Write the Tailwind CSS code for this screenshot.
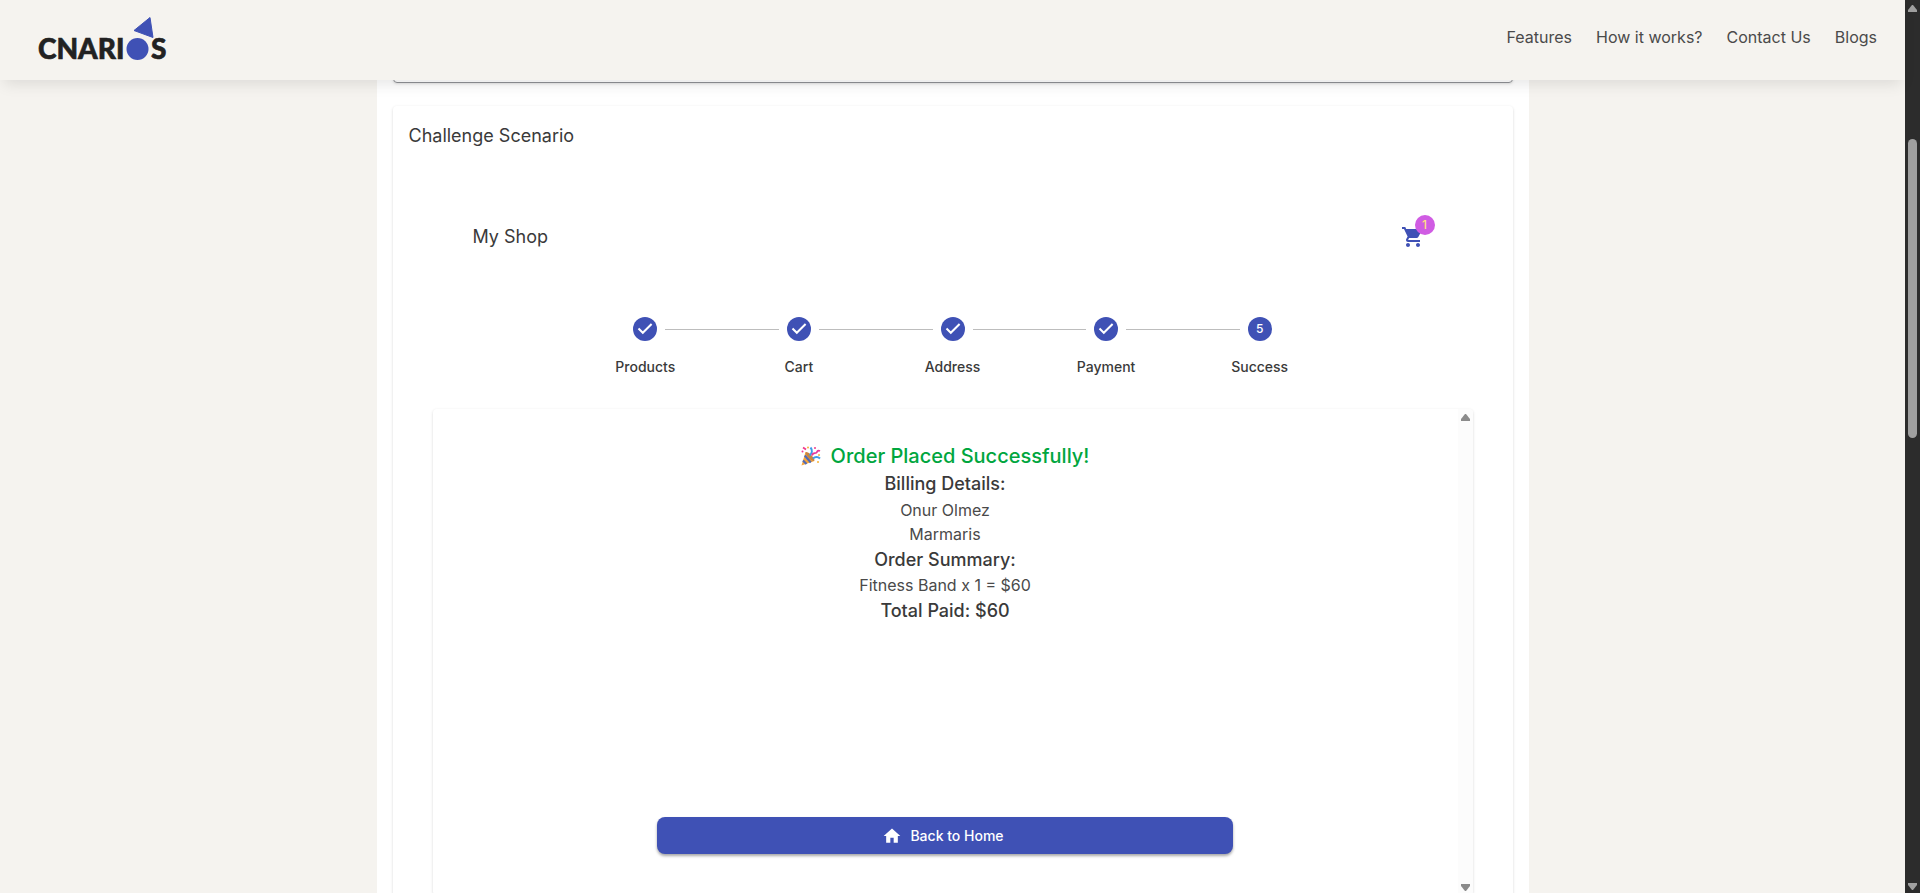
<!DOCTYPE html>
<html lang="en">
<head>
<meta charset="utf-8">
<meta name="viewport" content="width=device-width, initial-scale=1">
<title>Cnarios</title>
<script src="https://cdn.jsdelivr.net/npm/@tailwindcss/browser@4"></script>
</head>
<body class="flex h-screen overflow-hidden bg-[#f5f3ef] font-[Inter,sans-serif] text-[#3a3a3a]">
<div class="flex min-w-0 flex-1 flex-col">
  <header class="z-10 flex h-20 shrink-0 items-center justify-between bg-[#f5f3ef] pr-7 pl-9 shadow-[0_8px_14px_-4px_rgba(0,0,0,0.1)]">
    <a href="#" aria-label="Cnarios home">
      <svg class="h-12 w-36" viewBox="0 0 144 48">
        <g fill="#222" stroke="#222" stroke-width="0.6" font-family="Lato, sans-serif" font-weight="900" font-size="28">
          <text x="2" y="43">CNARI</text>
          <text x="115" y="43">S</text>
        </g>
        <circle cx="101.500" cy="33" r="11" fill="#3f51b5"/>
        <path d="M98 14.500 114 1.500 117 21.500Z" fill="#3f51b5" stroke="#3f51b5" stroke-linejoin="round"/>
      </svg>
    </a>
    <nav class="flex gap-6 pb-1.5 text-base text-[#4a4a4a]">
      <a href="#">Features</a>
      <a href="#">How it works?</a>
      <a href="#">Contact Us</a>
      <a href="#">Blogs</a>
    </nav>
  </header>

  <main class="mx-auto flex min-h-0 w-full max-w-6xl flex-1 flex-col overflow-hidden bg-white px-4">
    <div class="-mt-2 h-[11px] shrink-0 rounded-b border border-[#8f9195] shadow-sm"></div>
    <section class="mt-[23px] shrink-0 rounded px-10 pb-10 shadow-[0_1px_3px_rgba(0,0,0,0.16)]">
      <h2 class="-ml-6 pt-4 text-lg leading-[27px]">Challenge Scenario</h2>
      <div class="flex items-center justify-between px-10 pt-[76px]">
        <h3 class="text-lg leading-6">My Shop</h3>
        <button type="button" aria-label="Cart, 1 item" class="relative mr-2">
          <svg class="size-6" viewBox="0 0 24 24" fill="#3f51b5"><path d="M7 18c-1.100 0-1.990.9-1.990 2S5.900 22 7 22s2-.9 2-2-.9-2-2-2zM1 2v2h2l3.600 7.590-1.350 2.450c-.16.280-.25.610-.25.960 0 1.100.9 2 2 2h12v-2H7.420c-.14 0-.25-.11-.25-.25l.03-.12.900-1.630h7.450c.75 0 1.410-.41 1.750-1.030l3.580-6.490c.08-.14.120-.31.120-.48 0-.55-.45-1-1-1H5.210l-.94-2H1zm16 16c-1.100 0-1.990.9-1.990 2s.89 2 1.990 2 2-.9 2-2-.9-2-2-2z"/></svg>
          <span class="absolute -top-2.5 -right-2.5 flex size-5 items-center justify-center rounded-full bg-[#d05ce3] text-xs font-medium text-[#ffe082]">1</span>
        </button>
      </div>

      <ol class="mx-auto mt-[68px] grid max-w-3xl grid-cols-5 text-center text-sm font-medium">
        <li class="flex flex-col items-center gap-4">
          <div class="flex w-full items-center gap-2"><span class="flex-1"></span>
            <svg class="size-6" viewBox="0 0 24 24"><circle cx="12" cy="12" r="12" fill="#3f51b5"/><path d="m5.500 11.500 4.300 4.300 8.800-8.800" fill="none" stroke="#fff" stroke-width="2"/></svg>
            <span class="h-px flex-1 bg-[#bdbdbd]"></span></div>
          Products
        </li>
        <li class="flex flex-col items-center gap-4">
          <div class="flex w-full items-center gap-2"><span class="h-px flex-1 bg-[#bdbdbd]"></span>
            <svg class="size-6" viewBox="0 0 24 24"><circle cx="12" cy="12" r="12" fill="#3f51b5"/><path d="m5.500 11.500 4.300 4.300 8.800-8.800" fill="none" stroke="#fff" stroke-width="2"/></svg>
            <span class="h-px flex-1 bg-[#bdbdbd]"></span></div>
          Cart
        </li>
        <li class="flex flex-col items-center gap-4">
          <div class="flex w-full items-center gap-2"><span class="h-px flex-1 bg-[#bdbdbd]"></span>
            <svg class="size-6" viewBox="0 0 24 24"><circle cx="12" cy="12" r="12" fill="#3f51b5"/><path d="m5.500 11.500 4.300 4.300 8.800-8.800" fill="none" stroke="#fff" stroke-width="2"/></svg>
            <span class="h-px flex-1 bg-[#bdbdbd]"></span></div>
          Address
        </li>
        <li class="flex flex-col items-center gap-4">
          <div class="flex w-full items-center gap-2"><span class="h-px flex-1 bg-[#bdbdbd]"></span>
            <svg class="size-6" viewBox="0 0 24 24"><circle cx="12" cy="12" r="12" fill="#3f51b5"/><path d="m5.500 11.500 4.300 4.300 8.800-8.800" fill="none" stroke="#fff" stroke-width="2"/></svg>
            <span class="h-px flex-1 bg-[#bdbdbd]"></span></div>
          Payment
        </li>
        <li class="flex flex-col items-center gap-4">
          <div class="flex w-full items-center gap-2"><span class="h-px flex-1 bg-[#bdbdbd]"></span>
            <span class="flex size-6 items-center justify-center rounded-full bg-[#3f51b5] text-xs text-white">5</span>
            <span class="flex-1"></span></div>
          Success
        </li>
      </ol>

      <div class="mt-8 flex h-[486px] rounded shadow-[0_1px_3px_rgba(0,0,0,0.16)]">
        <div class="flex flex-1 flex-col items-center pt-[33px] text-center">
          <h4 class="flex items-center gap-2.5 text-xl leading-7 font-medium text-[#00a63e]">
            <svg class="size-5" viewBox="0 0 20 20" aria-hidden="true">
              <path d="M4.500 6 .5 19.500 13.500 15Z" fill="#f8a63a"/>
              <path d="m3.800 9.500 6 7M2 14.500l3.500 3.500" stroke="#4f6bb8" stroke-width="2.200"/>
              <ellipse cx="9" cy="10.600" rx="2" ry="6" transform="rotate(-45 9 10.600)" fill="#c98540"/>
              <path d="M8.500 9.500c2.500-2 3.500-5 1-8" fill="none" stroke="#3f9be8" stroke-width="2"/>
              <path d="M11 9.500c1-4 4-1 5-3.500.5-1 1-2 3-1" fill="none" stroke="#e6389b" stroke-width="1.800"/>
              <path d="M12 12.500c2-2 5-2 7 0" fill="none" stroke="#3f9be8" stroke-width="2"/>
              <path d="m2 1.500 3 2" stroke="#f03a8c" stroke-width="1.800"/>
              <g fill="#f03a8c"><circle cx="1.500" cy="5.500" r="1"/><circle cx="14" cy="2" r="1"/></g>
              <g fill="#f8b43a"><circle cx="7" cy="1.500" r="1"/><circle cx="17" cy="16" r="1"/><circle cx="18" cy="9" r="1"/></g>
            </svg>
            Order Placed Successfully!
          </h4>
          <h5 class="text-lg leading-7 font-medium">Billing Details:</h5>
          <p class="text-base text-[#4a4a4a]">Onur Olmez</p>
          <p class="text-base text-[#4a4a4a]">Marmaris</p>
          <h5 class="text-lg leading-[27px] font-medium">Order Summary:</h5>
          <p class="text-base text-[#4a4a4a]">Fitness Band x 1 = $60</p>
          <h5 class="text-lg leading-[27px] font-medium">Total Paid: $60</h5>
          <button type="button" class="mt-[193px] flex h-[37px] w-full max-w-xl items-center justify-center gap-2 rounded-lg bg-[#3f51b5] text-sm font-medium text-white shadow-[0_2px_3px_rgba(0,0,0,0.35)]">
            <svg class="-ml-1 size-5" viewBox="0 0 24 24" fill="currentColor"><path d="M10 20v-6h4v6h5v-8h3L12 3 2 12h3v8z"/></svg>
            Back to Home
          </button>
        </div>
        <div class="flex w-[15px] flex-col items-center justify-between rounded-r bg-[#fcfcfc] pt-[3px] pb-[3px]" aria-hidden="true">
          <svg class="h-3 w-[9px]" viewBox="0 0 9 12"><path d="M4 2h1l4 5v2H0V7z" fill="#8b8b8b"/></svg>
          <svg class="h-3 w-[9px]" viewBox="0 0 9 12"><path d="M4 11h1l4-5V4H0v2z" fill="#8b8b8b"/></svg>
        </div>
      </div>
    </section>
  </main>
</div>

<div class="flex w-[15px] shrink-0 flex-col items-center bg-[#2c2c2c] pt-[5px] pb-[3px]" aria-hidden="true">
  <svg class="h-[7px] w-[9px]" viewBox="0 0 9 7"><path d="M4 0h1l4 5v2H0V5z" fill="#9f9f9f"/></svg>
  <div class="mt-[127px] h-[299px] w-[9px] rounded-full bg-[#9f9f9f]"></div>
  <svg class="mt-auto h-[7px] w-[9px]" viewBox="0 0 9 7"><path d="M4 7h1l4-5V0H0v2z" fill="#9f9f9f"/></svg>
</div>
</body>
</html>
